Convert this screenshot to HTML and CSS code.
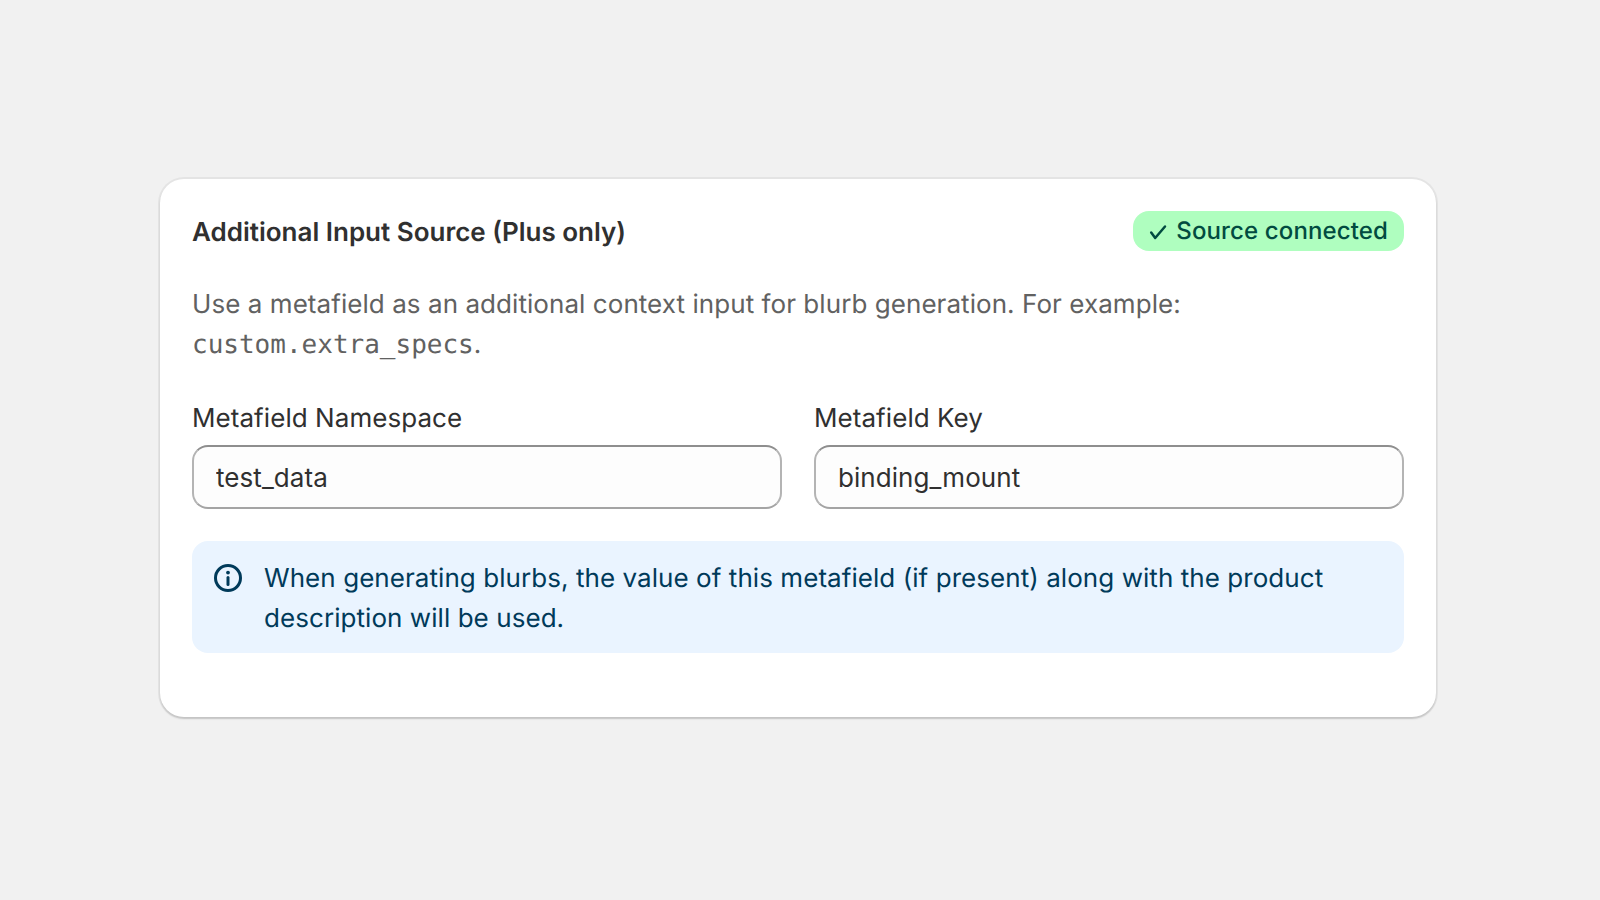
FILE: index.html
```html
<!DOCTYPE html>
<html lang="en">
<head>
<title>Additional Input Source</title>
<meta charset="utf-8">
<link rel="stylesheet" href="styles.css">
</head>
<body>

<div class="card">
  <div class="card-head">
    <h2 class="card-title">Additional Input Source (Plus only)</h2>
    <span class="badge">
      <svg class="badge-icon" viewBox="0 0 18 18" fill="none"><path d="M2.2 9.5L6.2 15 16 3.5" stroke="currentColor" stroke-width="2.5" stroke-linecap="round" stroke-linejoin="round"/></svg>
      Source connected
    </span>
  </div>

  <p class="desc">Use a metafield as an additional context input for blurb generation. For example: <code>custom.extra_specs</code>.</p>

  <div class="fields">
    <div class="field">
      <label class="field-label" for="ns">Metafield Namespace</label>
      <input class="field-input" id="ns" type="text" value="test_data">
    </div>
    <div class="field">
      <label class="field-label" for="key">Metafield Key</label>
      <input class="field-input" id="key" type="text" value="binding_mount">
    </div>
  </div>

  <div class="banner">
    <svg class="banner-icon" viewBox="0 0 40 40" fill="none">
      <circle cx="20" cy="20" r="12.5" stroke="currentColor" stroke-width="3"/>
      <circle cx="20" cy="14.6" r="1.9" fill="currentColor"/>
      <path d="M20 19.5v7" stroke="currentColor" stroke-width="3" stroke-linecap="round"/>
    </svg>
    <p class="banner-text">When generating blurbs, the value of this metafield (if present) along with the product description will be used.</p>
  </div>
</div>

</body>
</html>
```

FILE: styles.css
```css
* {
  box-sizing: border-box;
}

html {
  height: 100%;
}

body {
  margin: 0;
  padding: 179px 0 0 160px;
  height: 100%;
  background: #f1f1f1;
  color: #303030;
  font-family: Inter, "Liberation Sans", sans-serif;
  font-size: 26px;
  font-weight: 400;
  line-height: 40px;
  letter-spacing: 0.06px;
  text-rendering: geometricPrecision;
}

.card {
  width: 1276px;
  padding: 32px 32px 64px;
  background: #fff;
  border-radius: 24px;
  box-shadow: 0 2px 2px rgba(0, 0, 0, 0.14), 0 0 0 2px rgba(0, 0, 0, 0.05);
}

.card-head {
  display: flex;
  align-items: flex-start;
  justify-content: space-between;
}

.card-title {
  margin: 2px 0 0;
  font-size: 26px;
  line-height: 40px;
  font-weight: 600;
  letter-spacing: 0;
}

.badge {
  display: flex;
  align-items: center;
  gap: 9px;
  height: 40px;
  padding: 0 16px;
  border-radius: 16px;
  background: #affebf;
  color: #014b40;
  font-size: 24px;
  font-weight: 550;
  letter-spacing: 0.13px;
}

.badge-icon {
  width: 18px;
  height: 18px;
  margin-top: 2px;
}

.desc {
  margin: 32px 0 34px;
  color: #616161;
}

.desc code {
  font-family: "DejaVu Sans Mono", monospace;
  font-size: 26px;
  letter-spacing: 0;
}

.fields {
  display: grid;
  grid-template-columns: 1fr 1fr;
  gap: 32px;
}

.field-label {
  display: block;
  margin-bottom: 6px;
}

.field-input {
  display: block;
  width: 100%;
  height: 64px;
  padding: 0 22px;
  background: #fdfdfd;
  border: 2px solid #b4b4b4;
  border-top-color: #8e8e8e;
  border-bottom-color: #a4a4a4;
  border-radius: 16px;
  color: #303030;
  font: inherit;
  letter-spacing: inherit;
}

.banner {
  display: flex;
  gap: 16px;
  margin-top: 32px;
  padding: 18px 16px 14px;
  background: #eaf4ff;
  border-radius: 16px;
  color: #003a5a;
}

.banner-icon {
  flex: none;
  width: 40px;
  height: 40px;
  margin-top: -1px;
}

.banner-text {
  margin: 0;
}
```
